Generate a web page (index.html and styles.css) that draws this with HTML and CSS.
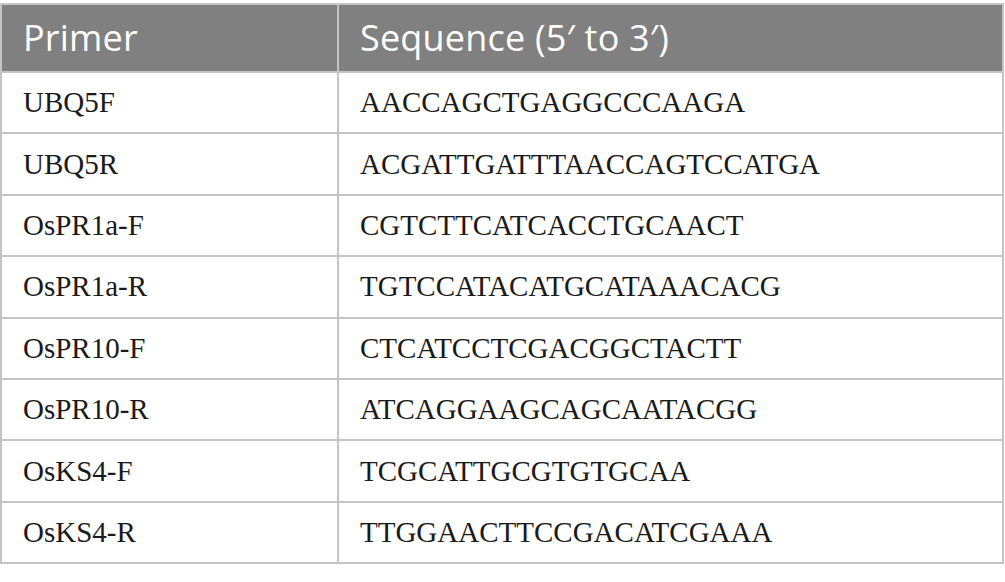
FILE: index.html
```html
<!DOCTYPE html>
<html>
<head>
<meta charset="utf-8">
<link rel="stylesheet" href="styles.css">
</head>
<body>
<table class="primers">
  <thead>
    <tr><th class="col-name">Primer</th><th>Sequence (5′ to 3′)</th></tr>
  </thead>
  <tbody>
    <tr><td>UBQ5F</td><td>AACCAGCTGAGGCCCAAGA</td></tr>
    <tr><td>UBQ5R</td><td>ACGATTGATTTAACCAGTCCATGA</td></tr>
    <tr><td>OsPR1a-F</td><td>CGTCTTCATCACCTGCAACT</td></tr>
    <tr><td>OsPR1a-R</td><td>TGTCCATACATGCATAAACACG</td></tr>
    <tr><td>OsPR10-F</td><td>CTCATCCTCGACGGCTACTT</td></tr>
    <tr><td>OsPR10-R</td><td>ATCAGGAAGCAGCAATACGG</td></tr>
    <tr><td>OsKS4-F</td><td>TCGCATTGCGTGTGCAA</td></tr>
    <tr><td>OsKS4-R</td><td>TTGGAACTTCCGACATCGAAA</td></tr>
  </tbody>
</table>
</body>
</html>
```
FILE: styles.css
```css
html, body {
  margin: 0;
  padding: 0;
  background: #ffffff;
}
body {
  padding-top: 3px;
}
.primers {
  width: 1004px;
  border-collapse: collapse;
  table-layout: fixed;
}
.primers th,
.primers td {
  border: 2px solid #c4c4c4;
  text-align: left;
  padding: 0 0 0 21px;
}
.primers th {
  background: #808080;
  color: #ffffff;
  font-family: "Open Sans", sans-serif;
  font-weight: 400;
  font-size: 36px;
  letter-spacing: 0.2px;
  height: 66px;
  line-height: 1;
}
.primers .col-name {
  width: 314px;
}
.primers td {
  font-family: "Liberation Serif", serif;
  font-size: 29px;
  color: #1a1a1a;
  height: 59.4px;
  line-height: 1;
}
```
